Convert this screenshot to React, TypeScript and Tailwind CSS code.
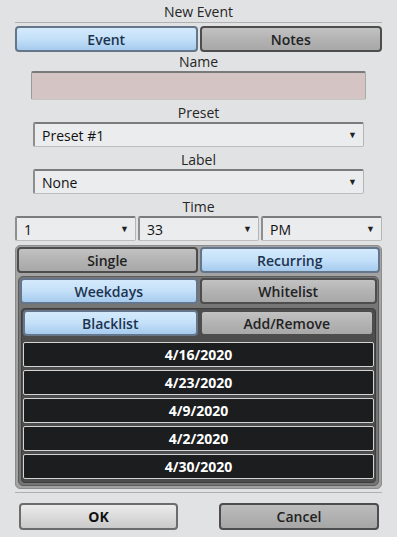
import React from "react";

const blueBtn =
  "flex-1 flex items-center justify-center rounded-[4px] border-2 border-[#66768a] bg-linear-to-b from-[#d4eafc] via-[#c4e0f8] to-[#a6cbee] text-[14px] font-semibold text-[#1b3350]";
const grayBtn =
  "flex-1 flex items-center justify-center rounded-[4px] border-2 border-[#4d4d4d] bg-linear-to-b from-[#c2c2c2] via-[#b3b3b3] to-[#a8a8a8] text-[14px] font-semibold text-[#222]";

function Tabs({ left, right, active }: { left: string; right: string; active: "left" | "right" }) {
  return (
    <div className="flex h-[26px] gap-[2px]">
      <div className={active === "left" ? blueBtn : grayBtn}>{left}</div>
      <div className={active === "right" ? blueBtn : grayBtn}>{right}</div>
    </div>
  );
}

function Select({ value, className = "" }: { value: string; className?: string }) {
  return (
    <div
      className={`flex h-[25px] items-center justify-between rounded-[2px] border border-t-2 border-l-2 border-t-[#7b7b7b] border-l-[#8e8e8e] border-r-[#b4b4b4] border-b-[#bdbdbd] bg-[#ebecee] pl-[7px] pr-[6px] text-[14px] text-[#111] ${className}`}
    >
      <span>{value}</span>
      <span className="text-[9px] text-[#222]">▼</span>
    </div>
  );
}

function Label({ children }: { children: React.ReactNode }) {
  return (
    <div className="flex h-[22px] items-center justify-center pt-[3px] text-[14px] text-[#262626]">{children}</div>
  );
}

export default function App() {
  const dates = ["4/16/2020", "4/23/2020", "4/9/2020", "4/2/2020", "4/30/2020"];

  return (
    <div
      className="flex h-[537px] w-[397px] flex-col bg-[#e1e2e3]"
      style={{ fontFamily: '"Open Sans", "Noto Sans", sans-serif' }}
    >
      <div className="mx-[15px] flex h-[23px] items-center justify-center border-b border-[#b0b0b0] text-[14px] text-[#262626]">
        New Event
      </div>

      <div className="mx-[15px] mt-[3px]">
        <Tabs left="Event" right="Notes" active="left" />
      </div>

      <div className="flex h-[19px] items-center justify-center text-[14px] text-[#262626]">Name</div>
      <div className="mx-[31px] h-[29px] rounded-[2px] border border-t-2 border-t-[#7a7a7a] border-l-[#9a9a9a] border-r-[#a8a8a8] border-b-[#c6c6c6] bg-[#d5c4c4]" />

      <Label>Preset</Label>
      <Select value="Preset #1" className="mx-[33px]" />

      <Label>Label</Label>
      <Select value="None" className="mx-[33px]" />

      <Label>Time</Label>
      <div className="mx-[15px] flex gap-[2px]">
        <Select value="1" className="flex-1" />
        <Select value="33" className="flex-1" />
        <Select value="PM" className="flex-1" />
      </div>

      <div className="mx-[15px] mt-[4px] flex flex-col gap-[3px] rounded-[5px] border border-[#8c8c8c] bg-[#a3a3a3] p-[1px] pb-[2px]">
        <Tabs left="Single" right="Recurring" active="right" />
        <div className="mx-[1px] flex flex-col gap-[4px] rounded-[5px] border border-[#5c5c5c] bg-[#767676] p-[1px] pb-[2px]">
          <Tabs left="Weekdays" right="Whitelist" active="left" />
          <div className="mx-[1px] flex flex-col gap-[3px] rounded-[4px] border border-[#3e3e3e] bg-[#4d4d4d] p-[1px] pb-[3px]">
            <Tabs left="Blacklist" right="Add/Remove" active="left" />
            <div className="mt-[3px] flex flex-col gap-[3px]">
              {dates.map((d) => (
                <div
                  key={d}
                  className="flex h-[25px] items-center justify-center rounded-[2px] border border-[#d4d4d4] bg-[#1c1d1f] text-[14px] font-bold text-white"
                >
                  {d}
                </div>
              ))}
            </div>
          </div>
        </div>
      </div>

      <div className="mx-[15px] mt-[3px] border-b border-[#b0b0b0]" />

      <div className="mt-[10px] flex justify-between px-[19px] pr-[18px]">
        <div className="flex h-[27px] w-[159px] items-center justify-center rounded-[4px] border-2 border-[#6c6c6c] bg-linear-to-b from-[#ececec] to-[#c9c9c9] text-[14px] font-bold text-[#111]">
          OK
        </div>
        <div className="flex h-[27px] w-[160px] items-center justify-center rounded-[4px] border-2 border-[#4d4d4d] bg-linear-to-b from-[#bcbcbc] to-[#a6a6a6] text-[14px] font-semibold text-[#222]">
          Cancel
        </div>
      </div>
    </div>
  );
}
